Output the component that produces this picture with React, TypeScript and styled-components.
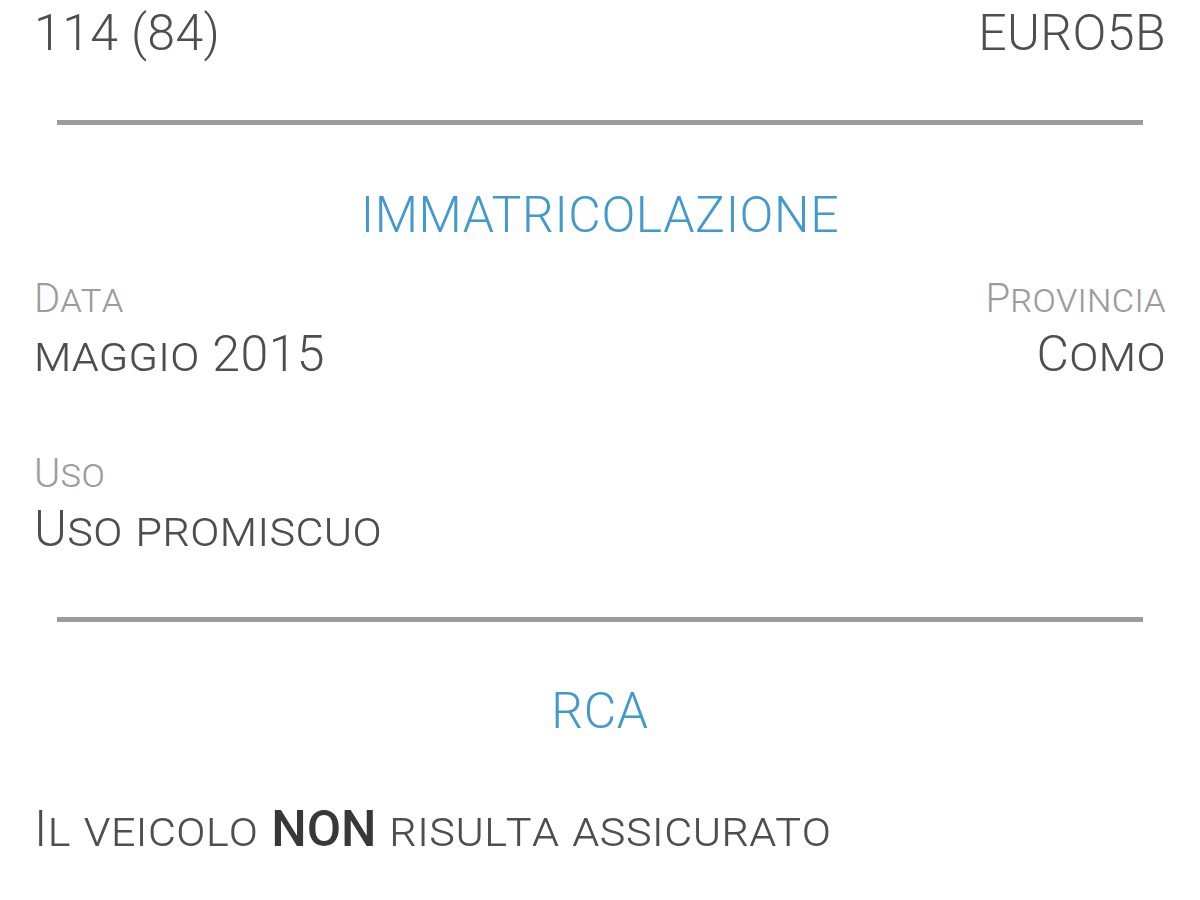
import React from "react";
import styled, { createGlobalStyle } from "styled-components";

const Global = createGlobalStyle`
  html, body { margin: 0; padding: 0; background: #ffffff; }
  body { font-family: Roboto, "Noto Sans", "Liberation Sans", sans-serif; }
`;

const Page = styled.div`
  padding: 3px 34px 40px;
  display: flex;
  flex-direction: column;
  width: 1200px;
  box-sizing: border-box;
`;

const Row = styled.div<{ $mt?: number }>`
  display: flex;
  justify-content: space-between;
  align-items: flex-start;
  margin-top: ${(p) => p.$mt ?? 0}px;
`;

const Field = styled.div<{ $right?: boolean }>`
  display: flex;
  flex-direction: column;
  gap: 2px;
  align-items: ${(p) => (p.$right ? "flex-end" : "flex-start")};
  text-align: ${(p) => (p.$right ? "right" : "left")};
`;

const Label = styled.div`
  font-size: 40px;
  line-height: 46px;
  font-weight: 300;
  color: #9c9c9c;
  font-variant: small-caps;
  letter-spacing: 0.3px;
`;

const Value = styled.div<{ $caps?: boolean }>`
  font-size: 50px;
  line-height: 60px;
  font-weight: 300;
  color: #4e4e4e;
  font-variant: ${(p) => (p.$caps ? "small-caps" : "normal")};
  letter-spacing: 0.4px;
`;

const Divider = styled.hr<{ $mt: number }>`
  border: none;
  height: 5px;
  background: #9d9d9d;
  margin: ${(p) => p.$mt}px 23px 0;
`;

const SectionTitle = styled.h2<{ $mt: number }>`
  margin: ${(p) => p.$mt}px 0 0;
  text-align: center;
  font-size: 50px;
  line-height: 60px;
  font-weight: 300;
  letter-spacing: 0.6px;
  color: #4299cd;
`;

const Note = styled.p<{ $mt: number }>`
  margin: ${(p) => p.$mt}px 0 0;
  font-size: 50px;
  line-height: 60px;
  font-weight: 300;
  color: #4e4e4e;
  font-variant: small-caps;
  letter-spacing: 0.5px;

  strong {
    font-weight: 500;
    color: #383838;
    font-variant: normal;
    letter-spacing: 0;
  }
`;

export default function App() {
  return (
    <>
      <Global />
      <Page>
        <Row>
          <Value>114 (84)</Value>
          <Value>EURO5B</Value>
        </Row>
        <Divider $mt={57} />
        <SectionTitle $mt={60}>IMMATRICOLAZIONE</SectionTitle>
        <Row $mt={31}>
          <Field>
            <Label>Data</Label>
            <Value $caps>maggio 2015</Value>
          </Field>
          <Field $right>
            <Label>Provincia</Label>
            <Value $caps>Como</Value>
          </Field>
        </Row>
        <Row $mt={67}>
          <Field>
            <Label>Uso</Label>
            <Value $caps>Uso promiscuo</Value>
          </Field>
        </Row>
        <Divider $mt={58} />
        <SectionTitle $mt={59}>RCA</SectionTitle>
        <Note $mt={58}>
          Il veicolo <strong>NON</strong> risulta assicurato
        </Note>
      </Page>
    </>
  );
}
